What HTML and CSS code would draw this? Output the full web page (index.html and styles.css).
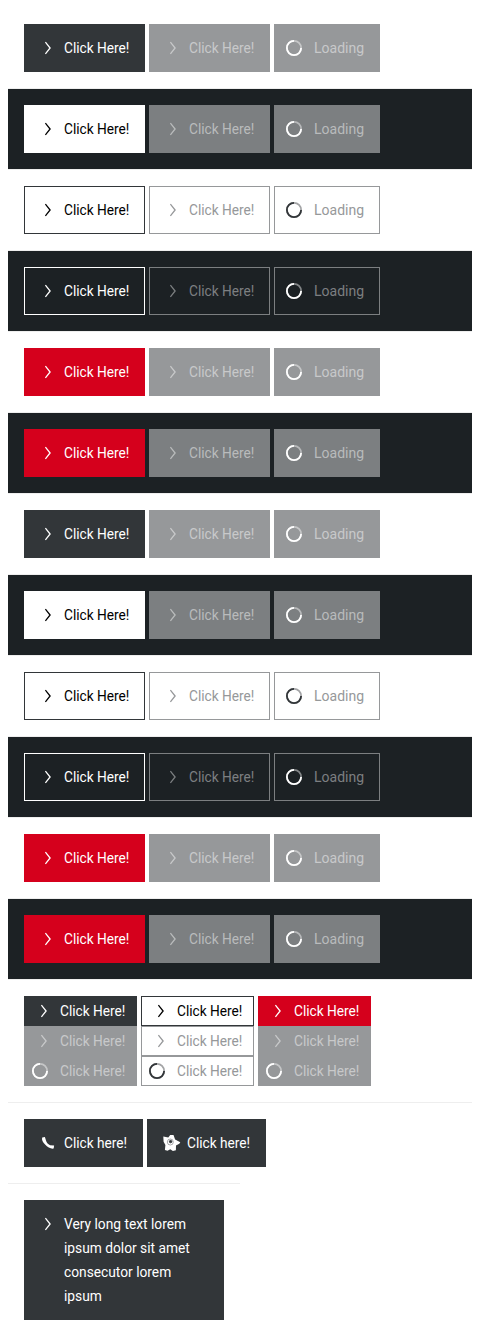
FILE: index.html
```html
<!DOCTYPE html>
<html lang="en">
<head>
<meta charset="utf-8">
<title>Buttons</title>
<link rel="stylesheet" href="styles.css">
</head>
<body>
<svg class="sprite" aria-hidden="true">
  <symbol id="arrow" viewBox="0 0 40 24"><path d="M21.4 6.2 26.1 12l-4.7 5.8" fill="none" stroke="currentColor" stroke-width="1.3"/></symbol>
  <symbol id="spin" viewBox="0 0 40 24"><circle cx="20" cy="12" r="7.1" fill="none" stroke="currentColor" stroke-width="1.8" opacity=".45"/><path d="M27.1 12A7.1 7.1 0 1 1 20 4.9" fill="none" stroke="currentColor" stroke-width="1.8"/></symbol>
  <symbol id="phone" viewBox="0 0 40 24"><path d="M18.200 6.400 20.900 5.900l1 3.400c.5 2.200 2 3.900 4.200 4.900l4 .3-.4 3.100c-2.600.7-6-1.200-8.600-4C18.700 11.200 17.500 8.600 18.200 6.400Z" fill="currentColor"/></symbol>
  <symbol id="flower" viewBox="0 0 40 24"><path fill="currentColor" fill-rule="evenodd" d="M16.300 5.600l5 .9 1.900-2.500 3.300.1 1.600 4.500 5.200 2.600-1 1.600-3.300 1.700-.1 4.700-3 .8-2.600-1.800-2.800 1.500-2.600-.7.500-5-1.800-3.200Z"/><circle class="core" cx="23.300" cy="11" r="3" fill="none" stroke-width=".7"/><circle class="core" cx="23.600" cy="10.600" r="1.200" stroke-width="1"/></symbol>
</svg>
<main id="page"></main>
<script src="main.js"></script>
</body>
</html>
```
FILE: styles.css
```css
body {
  margin: 8px;
  background: #fff;
  font: 16px/24px Roboto, "Liberation Sans", sans-serif;
}
.sprite { display: none; }
.core { fill: #323639; stroke: #323639; }
.core[fill="none"] { fill: none; opacity: .6; }
.panel {
  display: flex;
  gap: 4px;
  padding: 16px;
  border-bottom: 1px solid #eee;
}
.panel.on-dark { background: #1c2124; }
.panel.flush { border-bottom: 0; }
.panel.narrow {
  width: 200px;
  border-top: 1px solid #eee;
  border-bottom: 0;
}
.stack { display: flex; flex-direction: column; }
.btn {
  display: flex;
  align-items: flex-start;
  box-sizing: border-box;
  margin: 0;
  padding: 11px 15px 11px 0;
  border: 1px solid currentColor;
  text-align: left;
}
.icon { flex: none; width: 40px; height: 24px; margin-left: -1px; }
.label { display: block; white-space: nowrap; }
.label span { display: block; transform-origin: 0 50%; }
.click-upper { width: 65px; }
.click-upper span { transform: translateY(.5px) scale(.855, .97); }
.click-lower { width: 63px; }
.click-lower span { transform: translateY(.5px) scale(.855, .97); }
.loading { width: 50px; }
.loading span { transform: translateY(.5px) scale(.875, .97); }
.long { width: 144px; }
.long span { transform: translateY(.5px) scale(.86, .97); }
.compact { padding: 2px 11px 2px 0; }
.compact .icon { margin-left: -5px; }

.dark { background: #323639; border-color: #323639; color: #fff; }
.white { background: #fff; border-color: #fff; color: #000; }
.red { background: #d5001c; border-color: #d5001c; color: #fff; }
.ghost { border-color: #323639; color: #000; }
.ghost-light { border-color: #fff; color: #fff; }
.off { background: #96989a; border-color: #96989a; color: #c8c9ca; }
.on-dark .off { background: #7c7f81; border-color: #7c7f81; color: #b9bbbc; }
.ghost-off { border-color: #96989a; color: #96989a; }
.on-dark .ghost-off { border-color: #7c7f81; color: #7c7f81; }
.busy .icon { color: #fff; }
.ghost-off.busy .icon { color: #323639; }
.on-dark .ghost-off.busy .icon { color: #fff; }
```
FILE: main.js
```js
const labels = {
  "Click Here!": "click-upper",
  "Click here!": "click-lower",
  "Loading": "loading"
};

function button(kind, icon, text) {
  const lines = [].concat(text).map((line) => `<span>${line}</span>`).join("");
  return `<div class="btn ${kind}"><svg class="icon"><use href="#${icon}"/></svg>` +
    `<div class="label ${labels[text] || "long"}">${lines}</div></div>`;
}

function panel(kind, content) {
  return `<section class="panel ${kind}">${content}</section>`;
}

function row(theme, kind, off) {
  return panel(theme,
    button(kind, "arrow", "Click Here!") +
    button(off, "arrow", "Click Here!") +
    button(off + " busy", "spin", "Loading"));
}

function stack(kind, off) {
  return `<div class="stack">` +
    button("compact " + kind, "arrow", "Click Here!") +
    button("compact " + off, "arrow", "Click Here!") +
    button("compact busy " + off, "spin", "Click Here!") + `</div>`;
}

const group =
  row("", "dark", "off") +
  row("on-dark", "white", "off") +
  row("", "ghost", "ghost-off") +
  row("on-dark", "ghost-light", "ghost-off") +
  row("", "red", "off") +
  row("on-dark", "red", "off");

document.getElementById("page").innerHTML =
  group + group +
  panel("", stack("dark", "off") + stack("ghost", "ghost-off") + stack("red", "off")) +
  panel("flush", button("dark", "phone", "Click here!") + button("dark", "flower", "Click here!")) +
  panel("narrow", button("dark", "arrow",
    ["Very long text lorem", "ipsum dolor sit amet", "consecutor lorem", "ipsum"]));
```
